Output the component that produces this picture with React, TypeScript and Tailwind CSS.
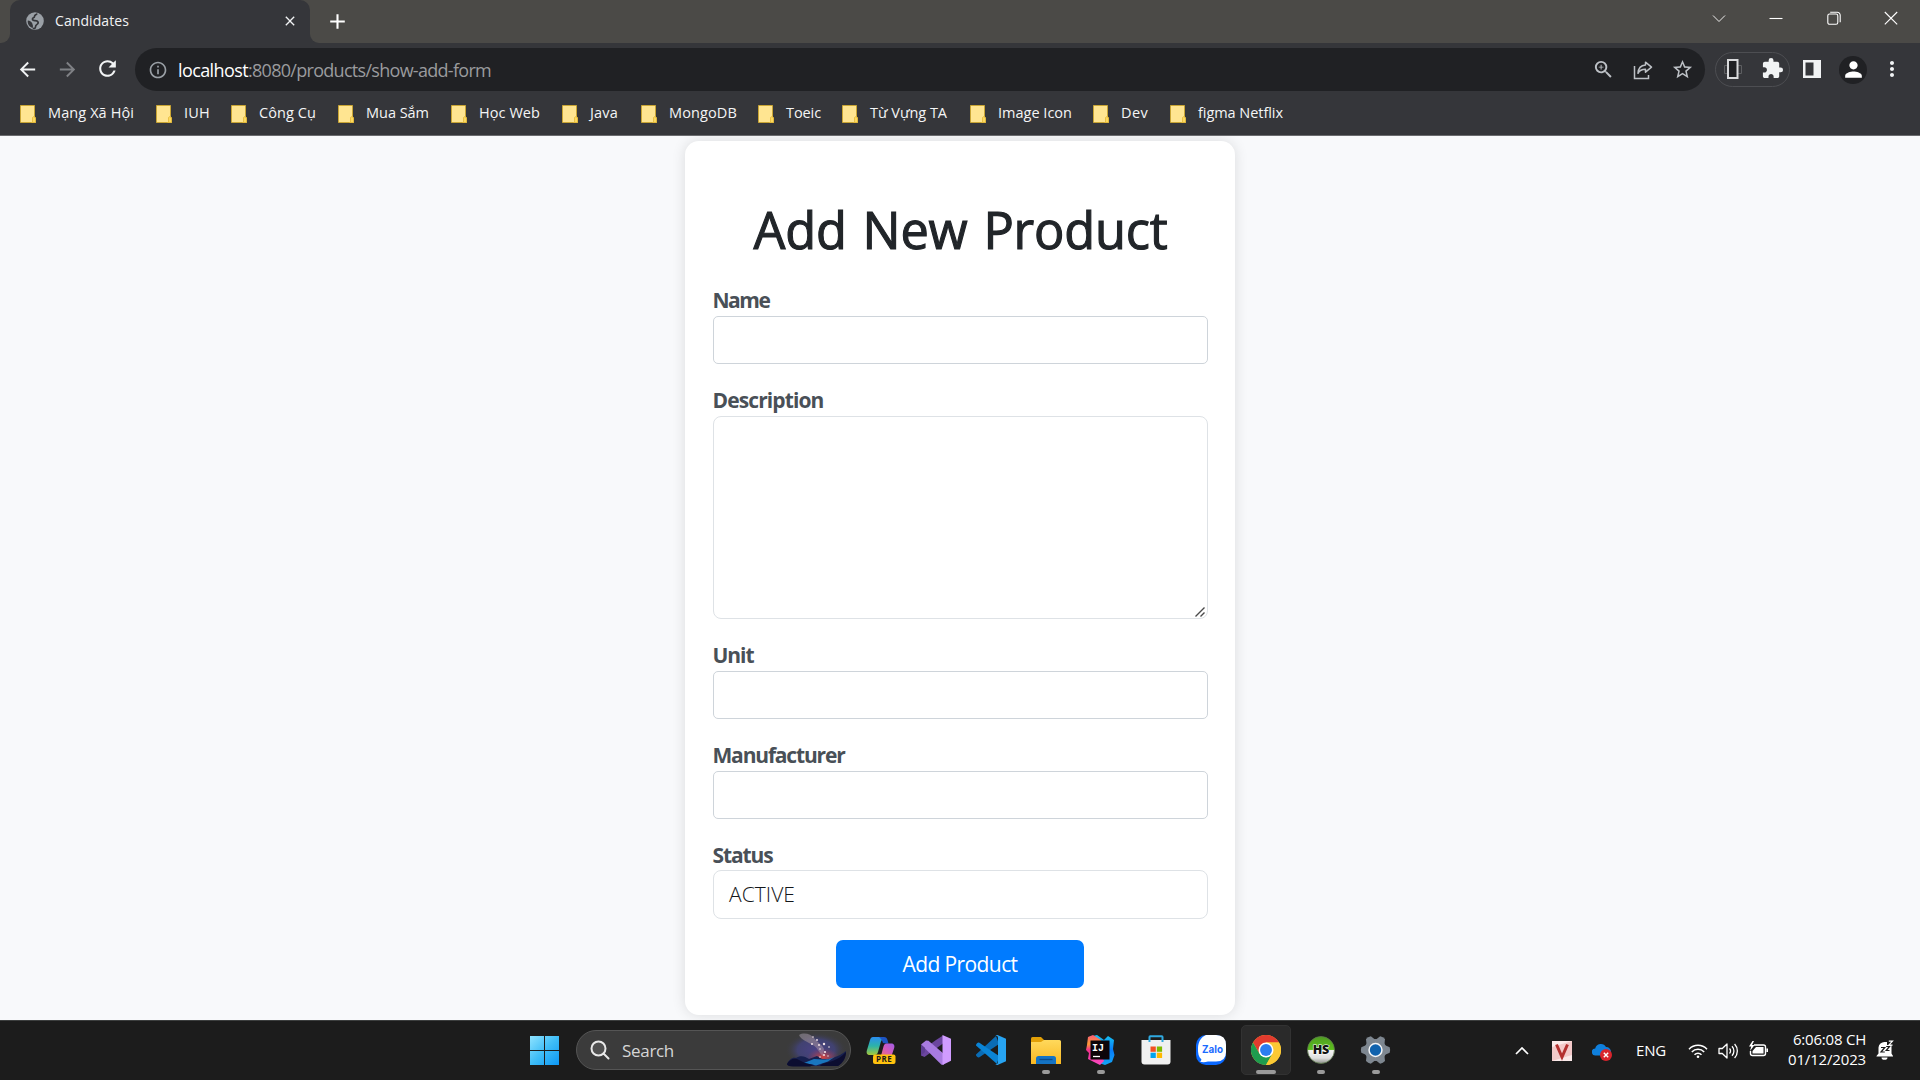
import { useLayoutEffect, useRef, type ReactNode } from "react";
import { MdAdd, MdArrowBack, MdArrowForward, MdClose, MdExtension, MdInfoOutline, MdMoreVert, MdPerson, MdRefresh, MdStarBorder, MdZoomIn } from "react-icons/md";

/* Text whose tracking is tuned so that it spans a given width. */
function Fit({ w, className = "", children }: { w: number; className?: string; children: string }) {
  const ref = useRef<HTMLSpanElement>(null);
  useLayoutEffect(() => {
    const el = ref.current;
    if (!el) return;
    el.style.letterSpacing = "0px";
    const natural = el.getBoundingClientRect().width;
    el.style.letterSpacing = `${(w - natural) / children.length}px`;
  }, [w, children]);
  return (
    <span ref={ref} className={"inline-block whitespace-nowrap " + className}>
      {children}
    </span>
  );
}

const bookmarks: { label: string; tw: number; slot: string }[] = [
  { label: "Mạng Xã Hội", tw: 86, slot: "w-[136px]" },
  { label: "IUH", tw: 26, slot: "w-[75px]" },
  { label: "Công Cụ", tw: 57, slot: "w-[107px]" },
  { label: "Mua Sắm", tw: 63, slot: "w-[113px]" },
  { label: "Học Web", tw: 61, slot: "w-[111px]" },
  { label: "Java", tw: 28, slot: "w-[79px]" },
  { label: "MongoDB", tw: 68, slot: "w-[117px]" },
  { label: "Toeic", tw: 35, slot: "w-[84px]" },
  { label: "Từ Vựng TA", tw: 77, slot: "w-[128px]" },
  { label: "Image Icon", tw: 74, slot: "w-[123px]" },
  { label: "Dev", tw: 27, slot: "w-[77px]" },
  { label: "figma Netflix", tw: 85, slot: "w-[130px]" },
];

function Folder() {
  return (
    <svg width="16" height="18" viewBox="0 0 16 18" className="shrink-0">
      <path d="M.5.5h14v11l1 1v5H.5z" fill="#ffe591" stroke="#c9a534" />
      <path d="M12.5 17v-4.5l2-1.5v1.500l1 .5v4.500h-4z" fill="#fdd95f" stroke="#e3b93a" strokeWidth=".8" />
    </svg>
  );
}

function GlobeIcon() {
  return (
    <svg width="18" height="18" viewBox="0 0 18 18" className="mb-[2px]">
      <circle cx="9" cy="9" r="8.8" fill="#9aa0a6" />
      <path d="M11 1.500c-.5 1.500-2.500 1.300-2.500 3S6 5.500 6.500 7.500s3 .5 4.500 1.500 1.500 2 .5 3-2 1-2 3-2 1.500-2.500 1" fill="none" stroke="#35363a" strokeWidth="1.700" />
      <path d="M1.800 8.500c2 0 4.200 1.500 4.500 3s1 1.500.5 4.500C3 15 1.300 11.500 1.800 8.500z" fill="#35363a" />
    </svg>
  );
}

function TabStrip() {
  return (
    <div className="flex h-[43px] bg-[#4b4a47]">
      <div className="flex w-[10px] items-end bg-[#35363a]">
        <div className="h-full w-full rounded-br-[9px] bg-[#4b4a47]" />
      </div>
      <div className="flex w-[300px] items-center rounded-t-[10px] bg-[#35363a] pr-[12px] pl-[16px]">
        <GlobeIcon />
        <span className="mb-[2px] ml-[11px] flex-1 text-[14px] leading-5 text-[#f1f3f4]">
          <Fit w={74}>Candidates</Fit>
        </span>
        <MdClose className="mb-[1px] size-[16px] text-[#f1f3f4]" />
      </div>
      <div className="flex w-[10px] bg-[#35363a]">
        <div className="h-full w-full rounded-bl-[9px] bg-[#4b4a47]" />
      </div>
      <div className="flex w-[35px] items-center justify-center">
        <MdAdd className="mb-px size-[25px] text-white" />
      </div>
      <div className="flex flex-1 justify-end pb-[7px] text-white">
        <WinButton><path d="M1 4.500l6 6 6-6" strokeWidth=".9" /></WinButton>
        <WinButton><path d="M.5 7.500h13" /></WinButton>
        <WinButton>
          <rect x=".8" y="3" width="10" height="10.300" rx="1.800" />
          <path d="M3.200 1.200h7a3 3 0 0 1 3 3v7" />
        </WinButton>
        <WinButton><path d="M.8 1l12.400 12.400M13.200 1L.8 13.400" /></WinButton>
      </div>
    </div>
  );
}

function WinButton({ children }: { children: ReactNode }) {
  return (
    <div className="flex w-[57.5px] items-center justify-center">
      <svg width="14" height="14" viewBox="0 0 14 14" fill="none" stroke="currentColor" strokeWidth="1.1">
        {children}
      </svg>
    </div>
  );
}

function Toolbar() {
  return (
    <div className="flex h-[50px] items-center bg-[#35363a] pt-[3px] text-[#f1f3f4]">
      <div className="flex w-[135px] pl-[16px]">
        <MdArrowBack className="size-[23px]" />
        <MdArrowForward className="ml-[17px] size-[23px] text-[#7f8185]" />
        <MdRefresh className="-mt-[2px] ml-[16px] size-[25px]" />
      </div>
      <div className="flex h-[43px] w-[1570px] items-center rounded-full bg-[#202124] pr-[11px] pl-[13px]">
        <MdInfoOutline className="size-[20px] text-[#9aa0a6]" />
        <div className="ml-[10px] flex-1 text-[18px] leading-6">
          <Fit w={70} className="text-white">localhost</Fit>
          <Fit w={243} className="text-[#9a9b9e]">:8080/products/show-add-form</Fit>
        </div>
        <MdZoomIn className="size-[23px] text-[#bdc1c6]" />
        <svg width="20" height="20" viewBox="0 0 20 20" fill="none" stroke="#bdc1c6" strokeWidth="1.5" className="ml-[18px]">
          <path d="M1.500 6v12.500h14V15" />
          <path d="M12.500 2.200l6 5-6 5V9.300c-3.500 0-6 1-7.500 4 .2-4.500 2.500-8 7.500-8.400z" strokeLinejoin="round" />
        </svg>
        <MdStarBorder className="ml-[18px] size-[23px] text-[#bdc1c6]" />
      </div>
      <div className="ml-[10px] flex h-[35px] w-[75px] items-center rounded-full border border-[#4d4e52] pl-[8px]">
        <svg width="18" height="20" viewBox="0 0 18 20" fill="none" className="-mt-[2px]">
          <path d="M.5 6.500h17v8H.5z" stroke="#5d5e61" />
          <rect x="4" y="1" width="9.500" height="18" fill="#202124" stroke="#d9dadc" strokeWidth="2" />
        </svg>
        <MdExtension className="-mt-[2px] ml-[19px] size-[23px]" />
      </div>
      <svg width="18" height="18" viewBox="0 0 18 18" className="-mt-[2px] ml-[13px]">
        <path fill="#f1f3f4" fillRule="evenodd" d="M0 0h18v18H0zM2.500 2.500v13h8v-13z" />
      </svg>
      <div className="ml-[18px] flex size-[28px] items-center justify-center overflow-hidden rounded-full bg-[#202124]">
        <MdPerson className="size-[25px] shrink-0 text-white" />
      </div>
      <MdMoreVert className="-mt-px ml-[13px] size-[24px]" />
    </div>
  );
}

function BookmarksBar() {
  return (
    <div className="flex h-[43px] items-center border-b border-[#6a6b6e] bg-[#35363a] pb-px pl-[20px]">
      {bookmarks.map((b) => (
        <div key={b.label} className={"flex items-center " + b.slot}>
          <Folder />
          <span className="mb-px pl-[12px] text-[14.5px] leading-5 text-[#f4f5f6]">
            <Fit w={b.tw}>{b.label}</Fit>
          </span>
        </div>
      ))}
    </div>
  );
}

const labelCls = "-ml-[0.5px] text-[21px] leading-[26px] font-bold text-[#495057]";

function TextField({ label, w }: { label: string; w: number }) {
  return (
    <div className="mb-[23px]">
      <label className={"flex h-[29px] " + labelCls}><Fit w={w}>{label}</Fit></label>
      <div className="h-[48px] w-full rounded-[5px] border border-[#ced4da] bg-white" />
    </div>
  );
}

function ProductForm() {
  return (
    <div className="h-[874px] w-[550px] rounded-[14px] bg-white pt-[57px] pr-[27px] pl-[28px] shadow-[0_0_14px_rgba(0,0,0,0.12)]">
      <h1 className="mb-[26px] flex h-[63px] justify-center text-[50.5px] leading-[63px] font-medium text-[#212529] [-webkit-text-stroke:1.1px_#212529] [word-spacing:3px]">
        <Fit w={414}>Add New Product</Fit>
      </h1>
      <TextField label="Name" w={57} />
      <div className="mb-[23px]">
        <label className={"flex h-[29px] " + labelCls}><Fit w={111}>Description</Fit></label>
        <div className="flex h-[203px] items-end justify-end rounded-[8px] border border-[#dee2e6] px-[2px] py-px">
          <svg width="10" height="10" viewBox="0 0 10 10" fill="none" stroke="#4a4a4a" strokeWidth="1.4">
            <path d="M.5 9.500l9-9M5.500 9.500l4-4" />
          </svg>
        </div>
      </div>
      <TextField label="Unit" w={41} />
      <TextField label="Manufacturer" w={132} />
      <label className={"flex h-[28px] " + labelCls}><Fit w={60}>Status</Fit></label>
      <div className="flex h-[49px] items-center rounded-[8px] border border-[#dee2e6] pl-[15px] text-[21px] font-light text-[#14171a]">
        <Fit w={66}>ACTIVE</Fit>
      </div>
      <button className="mt-[21px] ml-[123px] flex h-[48px] w-[248px] items-center justify-center rounded-[7px] bg-[#007bff] pb-px text-[21px] leading-6 text-white">
        <Fit w={115}>Add Product</Fit>
      </button>
    </div>
  );
}

function Slot({ children, run, active }: { children: ReactNode; run?: boolean; active?: boolean }) {
  return (
    <div className="flex w-[55px] shrink-0 justify-center py-[4px]">
      <div className={"flex h-[50px] w-[50px] flex-col items-center rounded-[5px] " + (active ? "border border-[#323232] bg-[#2a2a2a] pt-[8px]" : "pt-[9px]")}>
        <div className="flex size-[32px] items-center justify-center">{children}</div>
        {(run || active) && <div className={"mt-[4px] h-[4px] rounded-full bg-[#9a9a9a] " + (active ? "w-[20px]" : "w-[8px]")} />}
      </div>
    </div>
  );
}

function StartIcon() {
  return (
    <svg width="29" height="29" viewBox="0 0 29 29">
      <defs>
        <linearGradient id="win" x1="0" y1="0" x2="29" y2="29" gradientUnits="userSpaceOnUse">
          <stop stopColor="#8fe3ff" /><stop offset=".5" stopColor="#3fbdf7" /><stop offset="1" stopColor="#0c97f5" />
        </linearGradient>
      </defs>
      <path d="M0 0h14v14H0zM15 0h14v14H15zM0 15h14v14H0zM15 15h14v14H15z" fill="url(#win)" />
    </svg>
  );
}

function SearchArt() {
  return (
    <svg width="64" height="36" viewBox="0 0 64 36">
      <defs>
        <radialGradient id="glow" cx=".5" cy=".5" r=".5">
          <stop stopColor="#4a4285" /><stop offset=".6" stopColor="#42437a" stopOpacity=".85" /><stop offset="1" stopColor="#3b3b3b" stopOpacity="0" />
        </radialGradient>
        <radialGradient id="sunset" cx=".5" cy=".5" r=".5">
          <stop stopColor="#d8453f" /><stop offset="1" stopColor="#8a3d64" stopOpacity="0" />
        </radialGradient>
        <linearGradient id="plume" x1="0" y1="0" x2="1" y2="1">
          <stop stopColor="#77747c" /><stop offset="1" stopColor="#b89cb4" stopOpacity=".5" />
        </linearGradient>
      </defs>
      <ellipse cx="32" cy="18" rx="31" ry="18" fill="url(#glow)" />
      <ellipse cx="39" cy="25" rx="16" ry="9" fill="url(#sunset)" />
      <path d="M15 3c5-3 12-1 15 3s8 6 10 11l-1 7c-4-3-5-8-10-11S17 8 15 3z" fill="url(#plume)" opacity=".85" />
      <path d="M3 32c2-4 5-7 9-6 4-3 9-2 13 1l8-3 5 3c5 0 9 1 13-2 4-1 7-3 11-6 0 6-3 11-8 15H9c-4 0-6-1-6-2z" fill="#17204f" />
      <path d="M20 31l10-4 8 .5c5 0 8 0 13-3l-7 5-12 4z" fill="#1976bd" />
      <path d="M3 32c2-4 6-6 10-5l8 4 9 2-4 1.500H9c-4 0-6-1-6-2.500zM38 32c6-2 16-3 24-12 0 6-3 11-8 14H36z" fill="#0c0d30" />
      <g fill="#f3e3e6">
        <circle cx="29" cy="5" r=".8" /><circle cx="33" cy="8" r=".9" /><circle cx="28" cy="12" r="1" /><circle cx="35" cy="13" r="1" /><circle cx="40" cy="12" r="1.200" /><circle cx="36" cy="17" r=".8" /><circle cx="41" cy="20" r="1.100" /><circle cx="45" cy="15" r=".8" /><circle cx="36" cy="25" r=".8" /><circle cx="40" cy="23" r="1" /><circle cx="44" cy="24" r=".7" />
      </g>
    </svg>
  );
}

function CopilotIcon() {
  return (
    <svg width="30" height="30" viewBox="0 0 30 30">
      <defs>
        <linearGradient id="cpa" x1="0" y1="0" x2="0" y2="1"><stop stopColor="#2a8df0" /><stop offset=".5" stopColor="#2cb3a8" /><stop offset="1" stopColor="#a6c83a" /></linearGradient>
        <linearGradient id="cpb" x1="1" y1="0" x2="0" y2="1"><stop stopColor="#a05de8" /><stop offset=".5" stopColor="#d65bb8" /><stop offset="1" stopColor="#f27b62" /></linearGradient>
      </defs>
      <path d="M7 2h11l-1 2c-1.500 1-2 2-2.500 4l-2.500 9c-.5 2-1.500 3-3.500 3H4c-3 0-4-2-3-5L4 5c.6-2 1.500-3 3-3z" fill="url(#cpa)" />
      <path d="M13 2h5c2 0 3 1 3.500 3l1 3.500h-3L17 8c-1-3-2-4.500-4-6z" fill="#1d55c4" />
      <path d="M20.500 8.500H25c3 0 4 2 3 5l-2 6c-1 2-2 2.500-4 2.500H12c2 0 3-1 3.500-3l2-7.500c.5-2 1.500-3 3-3z" fill="url(#cpb)" />
      <rect x="7" y="19.500" width="22.500" height="9.500" rx="2" fill="#ffc20e" />
      <text x="18.200" y="27.200" textAnchor="middle" fontSize="8" fontWeight="700" letterSpacing=".5" fill="#1b1b1b" fontFamily="Open Sans, sans-serif">PRE</text>
    </svg>
  );
}

function VisualStudioIcon() {
  return (
    <svg width="30" height="30" viewBox="0 0 30 30">
      <path d="M0 20.500L3.500 22 22 8.500V.5L15 5 0 16z" fill="#6b469e" />
      <path d="M0 9.500L5 5.500l2.500.3L23 19v10.500l-2.500.3z" fill="#a87be0" />
      <path d="M0 9.500V20.500L4 17V13z" fill="#5d3d91" />
      <path d="M21.500 0L30 3.800v22L21.500 30z" fill="#d09cff" />
    </svg>
  );
}

function VSCodeIcon() {
  return (
    <svg width="30" height="30" viewBox="0 0 30 30">
      <path d="M0 19.500L20 1l3 8L3 22.500c-1 .6-3.500-1.500-3-3z" fill="#0a6cb5" />
      <path d="M0 10.500C-.2 9 2 7 3 7.600L23 21l-2 8z" fill="#0a84d6" />
      <path d="M21.500 0L30 3.800v22.400L21.500 30c-1 0-1.500-.4-2-1 1.500.5 2.500-.3 2.500-2V3c0-1.600-1-2.500-2.500-2 .5-.6 1-1 2-1z" fill="#27a4f2" />
    </svg>
  );
}

function ExplorerIcon() {
  return (
    <svg width="30" height="27" viewBox="0 0 30 27">
      <defs><linearGradient id="fold" x1="0" y1="0" x2="0" y2="1"><stop stopColor="#ffd95c" /><stop offset="1" stopColor="#f9b822" /></linearGradient></defs>
      <path d="M0 1.500Q0 0 1.500 0H10l3 3v6H0z" fill="#e2a007" />
      <path d="M0 5h10l3-2h15.500Q30 3 30 4.500V27H0z" fill="url(#fold)" />
      <path d="M5 27v-5.500Q5 19 7.500 19h15q2.500 0 2.500 2.500V27z" fill="#1473c4" />
      <path d="M8.500 22.500h13" stroke="#0b4b8a" strokeWidth="1.300" />
    </svg>
  );
}

function IntelliJIcon() {
  return (
    <svg width="29" height="30" viewBox="0 0 29 30">
      <defs>
        <linearGradient id="ija" x1="0" y1="0" x2="0" y2="1"><stop stopColor="#fb5b7a" /><stop offset=".3" stopColor="#fd9b34" /><stop offset=".5" stopColor="#f2308a" /><stop offset="1" stopColor="#fb4ac4" /></linearGradient>
        <linearGradient id="ijb" x1="0" y1="0" x2="0" y2="1"><stop stopColor="#16c4f2" /><stop offset=".5" stopColor="#087cfa" /><stop offset="1" stopColor="#12a5f5" /></linearGradient>
      </defs>
      <path d="M3 2l8-2 7 5 4-4 6 4-1 9 1.500 6-2.500 7-7 3-6-2-6-2z" fill="url(#ijb)" />
      <path d="M1 10l1-8 5-2 8 5-3 8 6 13-4 4-12-6 1-6-3-3z" fill="url(#ija)" />
      <rect x="4.500" y="5.500" width="19" height="19" fill="#0d0509" />
      <text x="6" y="15.500" fontSize="10" fontWeight="700" fill="#fff" fontFamily="Liberation Mono, monospace">IJ</text>
      <path d="M7 21.500h7" stroke="#fff" strokeWidth="1.300" />
    </svg>
  );
}

function StoreIcon() {
  return (
    <svg width="30" height="30" viewBox="0 0 30 30">
      <path d="M0.500 5h29v21.500Q29.500 29.500 26.500 29.500h-23Q.5 29.500.5 26.500z" fill="#f0f0f0" />
      <path d="M8.500 7V2q0-.7.7-.7h11.600q.7 0 .7.700v5" fill="none" stroke="#2fa9e0" strokeWidth="2" />
      <path d="M9.500 11.500h5.300v5.300H9.500z" fill="#f25022" /><path d="M15.800 11.500h5.300v5.300h-5.300z" fill="#7fba00" />
      <path d="M9.500 17.700h5.300V23H9.500z" fill="#00a4ef" /><path d="M15.800 17.700h5.300V23h-5.300z" fill="#ffb900" />
    </svg>
  );
}

function ZaloIcon() {
  return (
    <svg width="30" height="30" viewBox="0 0 30 30">
      <rect width="30" height="30" rx="10" fill="#0a68ff" />
      <path d="M10 0h10q10 0 10 10v7q0 9.500-10 9.500h-8c-3 1-5.500 1-8 .3 1-.7 1.500-1.500 1.300-2.500C2.500 22 1.800 18 2 13 2.300 7 5 2 10 0z" fill="#fff" />
      <text x="16.500" y="17.500" textAnchor="middle" fontSize="10" fontWeight="700" textLength="21" lengthAdjust="spacingAndGlyphs" fill="#1a6bff" fontFamily="Inter, sans-serif">Zalo</text>
    </svg>
  );
}

function ChromeIcon() {
  return (
    <svg width="30" height="30" viewBox="0 0 48 48">
      <circle cx="24" cy="24" r="24" fill="#fcc934" />
      <path d="M24 12h20.800A24 24 0 0 0 3.200 12L13.600 30z" fill="#e23b2e" />
      <path d="M3.200 12A24 24 0 0 0 24 48l10.400-18-10.400 6-10.400-6z" fill="#1e9c4f" />
      <path d="M24 48A24 24 0 0 0 44.800 12H24l10.400 18z" fill="#fcc934" />
      <circle cx="24" cy="24" r="12" fill="#fff" />
      <circle cx="24" cy="24" r="9.500" fill="#2b7df0" />
    </svg>
  );
}

function HSIcon() {
  return (
    <svg width="28" height="28" viewBox="0 0 28 28">
      <defs><linearGradient id="hs" x1="0" y1="0" x2="0" y2="1"><stop stopColor="#4f9c22" /><stop offset=".48" stopColor="#5cbf1c" /><stop offset=".52" stopColor="#f5f5f5" /><stop offset=".8" stopColor="#dedede" /><stop offset="1" stopColor="#8b8f88" /></linearGradient></defs>
      <circle cx="14" cy="14" r="13.500" fill="url(#hs)" stroke="#5d7a4c" strokeWidth=".8" />
      <text x="14" y="18.300" textAnchor="middle" fontSize="12.500" fontWeight="800" textLength="16.500" fill="#141414" stroke="#fff" strokeWidth="1" paintOrder="stroke" fontFamily="Open Sans, sans-serif">HS</text>
    </svg>
  );
}

function GearIcon() {
  return (
    <svg width="31" height="30" viewBox="0 0 31 30">
      <g fill="#7e8790">
        <circle cx="15.500" cy="15" r="11" />
        {[30, 90, 150, 210, 270, 330].map((a) => (
          <path key={a} d="M10.500 6L12.700.8q2.800-.9 5.600 0l2.200 5.200z" transform={`rotate(${a} 15.500 15)`} />
        ))}
      </g>
      <circle cx="15.500" cy="15" r="7.200" fill="#f4f6f8" />
      <circle cx="15.500" cy="15" r="5.700" fill="#0f62ad" />
    </svg>
  );
}

function Taskbar() {
  return (
    <div className="flex h-[60px] border-t border-[#3c3e3e] bg-[#1c1c1c]">
      <div className="flex shrink-0 pl-[517px]">
        <Slot><StartIcon /></Slot>
        <div className="mt-[9px] mr-[2px] ml-[4px] flex h-[40px] w-[275px] shrink-0 items-center rounded-full border border-[#555] bg-[#3b3b3b] pl-[13px]">
          <svg width="20" height="20" viewBox="0 0 20 20" fill="none" stroke="#e8e8e8" strokeWidth="2">
            <circle cx="8.500" cy="8.500" r="7" fill="#505050" /><path d="M13.500 13.500l5 5" strokeLinecap="round" />
          </svg>
          <span className="mt-px ml-[12px] flex-1 text-[17px] leading-6 text-[#d6d6d6]"><Fit w={52}>Search</Fit></span>
          <SearchArt />
          <span className="w-[2px]" />
        </div>
        <Slot><CopilotIcon /></Slot>
        <Slot><VisualStudioIcon /></Slot>
        <Slot><VSCodeIcon /></Slot>
        <Slot run><ExplorerIcon /></Slot>
        <Slot run><IntelliJIcon /></Slot>
        <Slot><StoreIcon /></Slot>
        <Slot><ZaloIcon /></Slot>
        <Slot active><ChromeIcon /></Slot>
        <Slot run><HSIcon /></Slot>
        <Slot run><GearIcon /></Slot>
      </div>
      <div className="flex flex-1 items-center justify-end pr-[26px] text-white">
        <svg width="14" height="8" viewBox="0 0 14 8" fill="none" stroke="#fff" strokeWidth="1.700"><path d="M1 7l6-6 6 6" /></svg>
        <svg width="20" height="20" viewBox="0 0 20 20" className="ml-[23px]">
          <rect width="20" height="20" fill="#f3c9c9" /><path d="M0 0h20L0 6zM0 20h20V14z" fill="#fff" opacity=".6" />
          <path d="M4.500 3.500L10 16 15.500 3.500" fill="none" stroke="#b3302f" strokeWidth="3" />
        </svg>
        <svg width="20" height="20" viewBox="0 0 20 20" className="ml-[20px]">
          <path d="M3.500 14.500a3.500 3.500 0 0 1-.3-7A5.800 5.800 0 0 1 14 6a4.800 4.800 0 0 1 5 5l-1 3.500z" fill="#0f7fdc" />
          <circle cx="14" cy="14" r="6" fill="#d9242c" /><path d="M11.800 11.800l4.400 4.400M16.200 11.800l-4.400 4.400" stroke="#fff" strokeWidth="1.400" />
        </svg>
        <span className="mb-[2px] ml-[24px] w-[29px] text-[15px] leading-5"><Fit w={30}>ENG</Fit></span>
        <svg width="20" height="16" viewBox="0 0 20 16" fill="none" stroke="#fff" strokeWidth="1.500" className="ml-[23px]">
          <path d="M1 6.200a12.500 12.500 0 0 1 18 0M3.800 9a8.600 8.600 0 0 1 12.400 0M6.500 11.800a5 5 0 0 1 7 0" /><circle cx="10" cy="13.800" r="1.300" fill="#fff" stroke="none" />
        </svg>
        <svg width="21" height="18" viewBox="0 0 21 18" fill="none" stroke="#fff" strokeWidth="1.300" className="ml-[10px]">
          <path d="M1 6.500h3.300L9 2v14l-4.700-4.500H1z" strokeLinejoin="round" /><path d="M11.500 6.500a3.500 3.500 0 0 1 0 5M14 4.200a7 7 0 0 1 0 9.600M16.600 2a10.300 10.300 0 0 1 0 14" />
        </svg>
        <svg width="20" height="16" viewBox="0 0 20 16" fill="none" stroke="#fff" strokeWidth="1.400" className="mb-[3px] ml-[9px]">
          <path d="M6 4h9.500a2 2 0 0 1 2 2v6.500a2 2 0 0 1-2 2h-11a2 2 0 0 1-2-2V10" /><path d="M8 6h7.500v6.500h-11V10z" fill="#fff" stroke="none" /><path d="M19.200 7.500v3.500" strokeWidth="1.600" /><path d="M4.500 0L1 5.500h2.200L2 10l4.500-6H4L6 0z" fill="#fff" stroke="none" />
        </svg>
        <div className="mb-[3px] ml-[20px] flex w-[78px] flex-col items-end text-[15px] leading-[20px]">
          <Fit w={73}>6:06:08 CH</Fit>
          <Fit w={78}>01/12/2023</Fit>
        </div>
        <svg width="18" height="20" viewBox="0 0 18 20" className="mb-[2px] ml-[10px]">
          <path d="M2.500 7.500A6 6 0 0 1 8.500 2H11v3h4.500v8.500L17 16v.5H.5V16l2-2.500zM5.500 17.500h6a3 2.300 0 0 1-6 0z" fill="#fff" />
          <path d="M5 7.500h3.800L5 12h3.800M10.200 6.500h3.300l-3.300 4h3.300" fill="none" stroke="#1c1c1c" strokeWidth="1.200" />
          <path d="M12.800 1.200h3.700l-3.700 4h3.700" fill="none" stroke="#fff" strokeWidth="1.200" />
        </svg>
      </div>
    </div>
  );
}

export default function App() {
  return (
    <div className="flex h-[1080px] w-[1920px] flex-col overflow-hidden bg-[#f8f9fa] font-['Open_Sans','Noto_Sans',sans-serif]">
      <TabStrip />
      <Toolbar />
      <BookmarksBar />
      <main className="flex h-[884px] justify-center overflow-hidden bg-[#f8f9fb] pt-[5px]">
        <ProductForm />
      </main>
      <Taskbar />
    </div>
  );
}
